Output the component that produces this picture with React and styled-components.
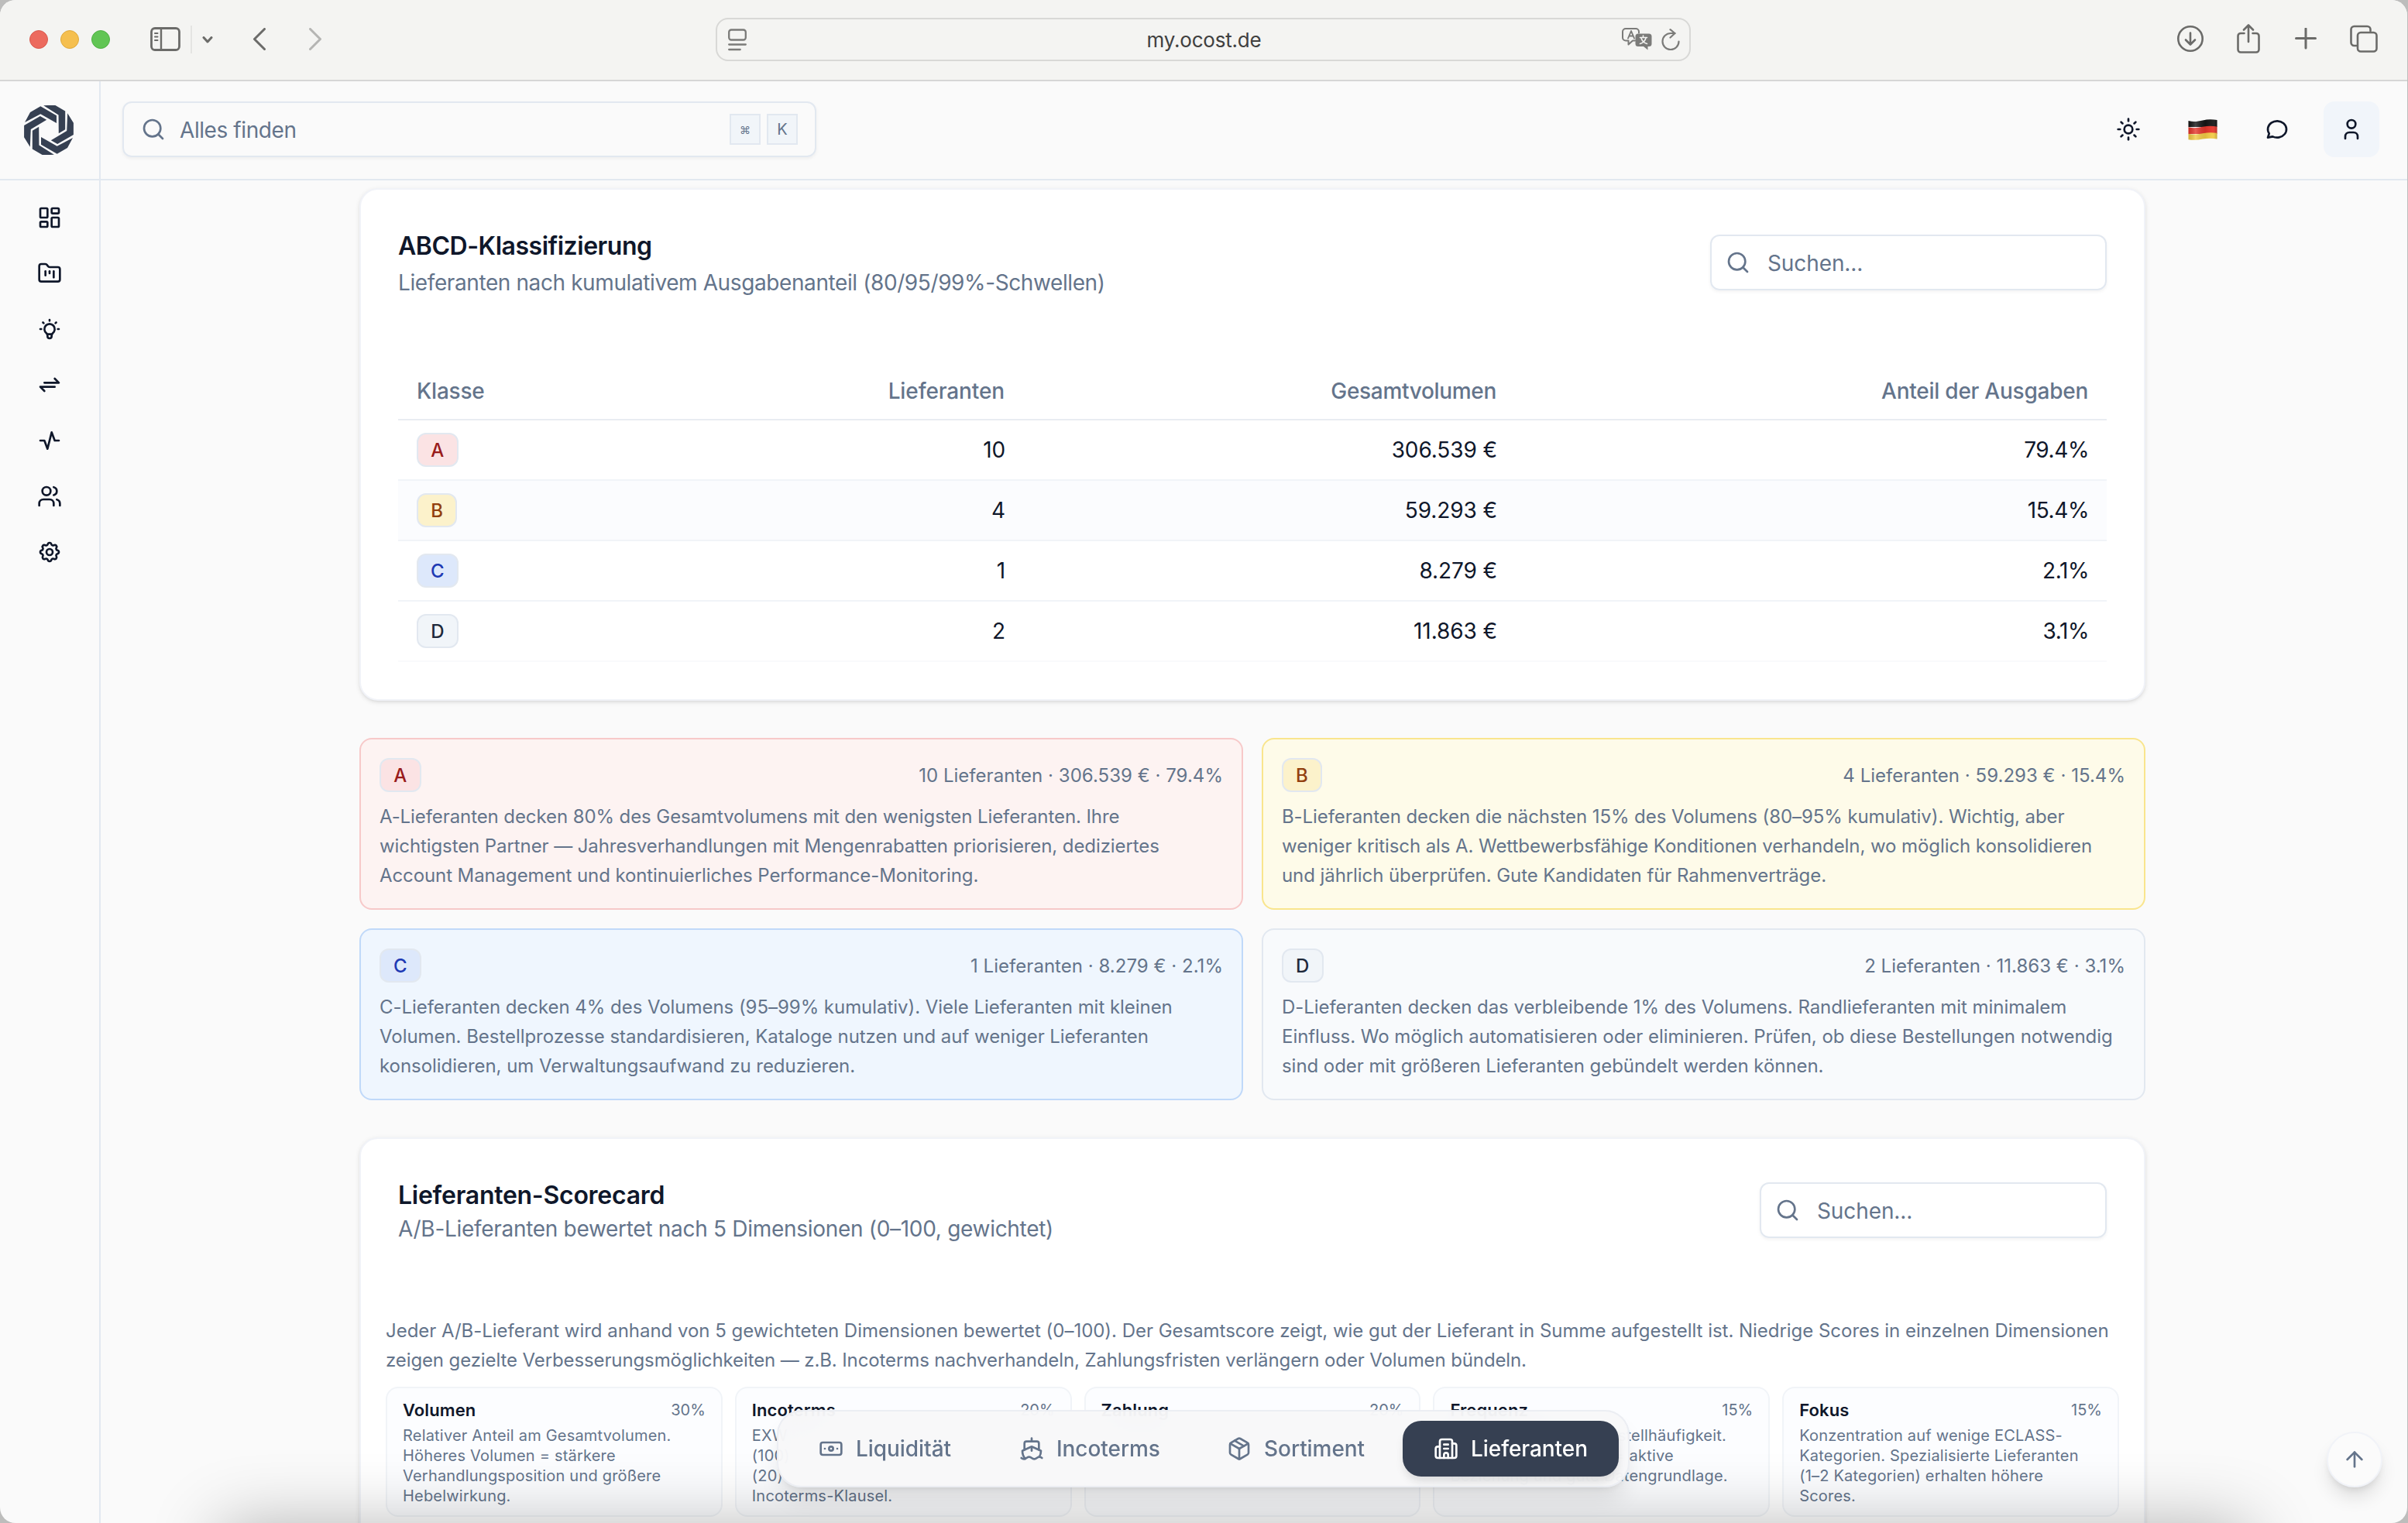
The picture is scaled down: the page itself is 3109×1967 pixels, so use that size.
import React from 'react';
import styled, { createGlobalStyle } from 'styled-components';
import {
  ArrowUp,
  Banknote,
  Building2,
  FolderKanban,
  LayoutDashboard,
  Package,
  Search,
  Ship,
  Sun,
  Users,
} from 'lucide-react';
import { TbActivity, TbArrowsExchange, TbBulb, TbMessageCircle, TbSettings, TbUser } from 'react-icons/tb';

const GlobalStyle = createGlobalStyle`
  * {
    box-sizing: border-box;
  }

  body {
    margin: 0;
    overflow: hidden;
    background: #bdbdbc;
    font-family: Inter, 'Liberation Sans', sans-serif;
    color: #0f172a;
  }
`;

/* ---------- browser window ---------- */

const Window = styled.div`
  position: relative;
  display: flex;
  flex-direction: column;
  width: 3108px;
  height: 1967px;
  overflow: hidden;
  border-radius: 20px;
  background: #fafafa;
`;

const Toolbar = styled.div`
  display: grid;
  grid-template-columns: 924px 1259px 1fr;
  align-items: center;
  flex: none;
  height: 105px;
  padding-bottom: 1px;
  border-bottom: 2px solid #d6d6d6;
  background: #f4f4f2;
  color: #6b6b69;
`;

const ToolbarLeft = styled.div`
  display: flex;
  align-items: center;
  padding-left: 38px;
`;

const Lights = styled.div`
  display: flex;
  gap: 16px;
  margin-right: 51px;
`;

const Light = styled.span`
  width: 24px;
  height: 24px;
  border: 1px solid ${(props) => props.$edge};
  border-radius: 50%;
  background: ${(props) => props.$color};
`;

const Divider = styled.span`
  width: 2px;
  height: 36px;
  margin: 0 13px 0 13px;
  background: #e4e4e2;
`;

const Glyph = styled.svg`
  display: block;
  flex: none;
  fill: none;
  stroke: currentColor;
  stroke-linecap: round;
  stroke-linejoin: round;
  margin-left: ${(props) => props.$ml || 0}px;
  opacity: ${(props) => (props.$dim ? 0.45 : 1)};
`;

const AddressBar = styled.div`
  display: grid;
  grid-template-columns: 1fr auto 1fr;
  align-items: center;
  height: 56px;
  padding: 0 12px 0 14px;
  border: 2px solid #d8d8d6;
  border-radius: 16px;
  color: #7b7b79;
`;

const Address = styled.span`
  color: #40403f;
  font-size: 26px;
  letter-spacing: -0.22px;
`;

const AddressActions = styled.div`
  display: flex;
  align-items: center;
  justify-content: flex-end;
  gap: 11px;
`;

const ToolbarRight = styled.div`
  display: flex;
  align-items: center;
  justify-content: flex-end;
  padding-right: 37px;
`;

/* ---------- app shell ---------- */

const Shell = styled.div`
  display: flex;
  flex: 1;
  min-height: 0;
`;

const Sidebar = styled.aside`
  display: flex;
  flex-direction: column;
  flex: none;
  width: 130px;
  border-right: 2px solid #e2e8f0;
`;

const LogoBox = styled.div`
  display: flex;
  align-items: center;
  justify-content: center;
  height: 128px;
  padding: 0 2px 1px 0;
  border-bottom: 2px solid #e2e8f0;
`;

const SideNav = styled.nav`
  display: flex;
  flex-direction: column;
  align-items: center;
  padding-top: 12px;
`;

const SideLink = styled.a`
  display: flex;
  align-items: center;
  justify-content: center;
  width: 72px;
  height: 72px;
  color: #0f172a;
`;

const Main = styled.div`
  flex: 1;
  min-width: 0;
`;

const Header = styled.header`
  display: flex;
  align-items: center;
  justify-content: space-between;
  height: 128px;
  padding: 0 36px 2px 28px;
  border-bottom: 2px solid #e2e8f0;
`;

const SearchField = styled.div`
  display: flex;
  align-items: center;
  width: ${(props) => props.$width}px;
  height: 72px;
  padding: 0 22px 0 ${(props) => props.$pad || 18}px;
  border: 2px solid #e2e8f0;
  border-radius: 12px;
  box-shadow: 0 2px 4px rgba(0, 0, 0, 0.05);
  color: #64748b;
  font-size: 28px;
  letter-spacing: ${(props) => props.$spacing || -0.1}px;
  white-space: nowrap;
`;

const SearchText = styled.span`
  flex: 1;
  padding-top: 2px;
  margin-left: ${(props) => props.$gap}px;
`;

const Key = styled.kbd`
  display: flex;
  align-items: center;
  justify-content: center;
  width: 40px;
  height: 40px;
  margin-left: 8px;
  border: 2px solid #e2e8f0;
  background: #f1f5f9;
  font-family: inherit;
  font-size: ${(props) => props.$size}px;
  letter-spacing: 0;
`;

const HeaderActions = styled.div`
  display: flex;
  gap: 24px;
`;

const IconButton = styled.button`
  display: flex;
  align-items: center;
  justify-content: center;
  width: 72px;
  height: 72px;
  padding: 0;
  border: none;
  border-radius: 14px;
  background: ${(props) => (props.$active ? '#f1f5fa' : 'transparent')};
  color: #0f172a;
`;

const Content = styled.main`
  display: flex;
  flex-direction: column;
  width: 2306px;
  margin: 10px 0 0 334px;
`;

/* ---------- cards ---------- */

const Card = styled.section`
  height: ${(props) => props.$height}px;
  margin-bottom: 48px;
  padding: 48px ${(props) => props.$side}px;
  border: 2px solid #f1f3f8;
  border-radius: 24px;
  background: #fff;
  box-shadow: 0 2px 6px rgba(0, 0, 0, 0.1), 0 2px 4px -2px rgba(0, 0, 0, 0.1);
`;

const CardHeader = styled.div`
  display: flex;
  align-items: center;
  justify-content: space-between;
  padding: 0 ${(props) => props.$inset || 0}px;
  margin-bottom: ${(props) => props.$mb}px;
`;

const Title = styled.h2`
  margin: 0 0 ${(props) => props.$gap || 0}px;
  padding-top: 2px;
  font-size: 32px;
  font-weight: 600;
  line-height: 46px;
  letter-spacing: ${(props) => props.$spacing}px;
`;

const Subtitle = styled.p`
  margin: 0;
  color: #64748b;
  font-size: 28px;
  line-height: 40px;
  letter-spacing: ${(props) => props.$spacing}px;
`;

const Table = styled.table`
  width: 2206px;
  table-layout: fixed;
  border-collapse: separate;
  border-spacing: 0;
`;

const Th = styled.th`
  width: ${(props) => props.$width}px;
  height: 76px;
  padding: 2px 24px 0;
  border-bottom: 2px solid #e9ecf2;
  color: #64748b;
  font-size: 28px;
  font-weight: 500;
  letter-spacing: ${(props) => props.$spacing || 0}px;
  text-align: ${(props) => (props.$left ? 'left' : 'right')};
`;

const Td = styled.td`
  height: 78px;
  padding: 0 23px 0 24px;
  border-bottom: 2px solid ${(props) => (props.$last ? '#f9fafc' : '#f1f4f8')};
  background: ${(props) => (props.$tinted ? '#fbfcfe' : 'transparent')};
  font-size: 28px;
  letter-spacing: ${(props) => props.$spacing || -0.1}px;
  text-align: ${(props) => (props.$left ? 'left' : 'right')};
`;

const badgeTones = {
  A: { bg: '#fbe3e4', text: '#991b1b' },
  B: { bg: '#fcf2cb', text: '#92400e' },
  C: { bg: '#dde8fb', text: '#1e3ab4' },
  D: { bg: '#f1f5f9', text: '#1e293b' },
};

const Badge = styled.span`
  display: inline-flex;
  align-items: center;
  justify-content: center;
  width: ${(props) => (props.$tone === 'B' ? 52 : 53.5)}px;
  height: 44px;
  border: 2px solid #e2e8f0;
  border-radius: 12px;
  background: ${(props) => badgeTones[props.$tone].bg};
  color: ${(props) => badgeTones[props.$tone].text};
  font-size: 24px;
  font-weight: 500;
  vertical-align: middle;
`;

const ClassGrid = styled.div`
  display: grid;
  grid-template-columns: 1fr 1fr;
  gap: 24px;
  margin-bottom: 48px;
`;

const classTones = {
  A: { bg: '#fdf3f2', border: '#f7c9c9' },
  B: { bg: '#fefbe9', border: '#f9e58d' },
  C: { bg: '#eff6fe', border: '#c0d9f9' },
  D: { bg: '#f8fafc', border: '#e2e8f0' },
};

const ClassCard = styled.article`
  height: 222px;
  padding: 24px;
  border: 2px solid ${(props) => classTones[props.$tone].border};
  border-radius: 16px;
  background: ${(props) => classTones[props.$tone].bg};
`;

const ClassHead = styled.div`
  display: flex;
  align-items: center;
  justify-content: space-between;
  margin-bottom: 13px;
`;

const ClassStat = styled.span`
  color: #64748b;
  font-size: 24px;
  letter-spacing: 0.03px;
`;

const Note = styled.p`
  margin: 0;
  color: #64748b;
  font-size: 24px;
  line-height: 38px;
  letter-spacing: ${(props) => props.$spacing}px;
  white-space: pre-line;
`;

const Dimensions = styled.div`
  display: grid;
  grid-template-columns: repeat(5, 1fr);
  gap: 16px;
  margin-top: 15px;
`;

const Dimension = styled.div`
  height: 168px;
  padding: 12px 20px;
  border: 2px solid #f1f4f8;
  border-radius: 16px;
  background: #fcfdff;
`;

const DimensionHead = styled.div`
  display: flex;
  align-items: center;
  justify-content: space-between;
  height: 32px;
  margin-bottom: 4px;
`;

const DimensionName = styled.strong`
  font-size: 22px;
  font-weight: 600;
  letter-spacing: 0.1px;
`;

const DimensionWeight = styled.span`
  color: #64748b;
  font-size: 20px;
`;

const DimensionText = styled.p`
  margin: 0;
  color: #64748b;
  font-size: 20px;
  line-height: 26px;
  letter-spacing: 0.2px;
  white-space: pre;
`;

/* ---------- floating parts ---------- */

const DockShade = styled.div`
  position: absolute;
  top: 1972px;
  left: 285px;
  right: 205px;
  height: 200px;
  box-shadow: 0 0 90px rgba(0, 0, 0, 0.3);
`;

const TabBar = styled.nav`
  position: absolute;
  left: 1003px;
  top: 1821px;
  display: flex;
  gap: 8px;
  height: 100px;
  padding: 12px;
  border: 2px solid #eceef3;
  border-radius: 32px;
  background: rgba(248, 248, 249, 0.93);
  backdrop-filter: blur(24px);
  box-shadow: 0 20px 30px -6px rgba(0, 0, 0, 0.1), 0 8px 12px -8px rgba(0, 0, 0, 0.12);
`;

const Tab = styled.a`
  display: flex;
  align-items: center;
  gap: 16px;
  width: ${(props) => props.$width}px;
  height: 72px;
  padding-left: 40px;
  border-radius: 24px;
  background: ${(props) => (props.$active ? '#364052' : 'transparent')};
  box-shadow: ${(props) => (props.$active ? '0 8px 12px -2px rgba(0, 0, 0, 0.12)' : 'none')};
  color: ${(props) => (props.$active ? '#fff' : '#64748b')};
  font-size: 28px;
  font-weight: 500;
  letter-spacing: -0.06px;
`;

const ToTop = styled.button`
  position: absolute;
  left: 3004px;
  top: 1849px;
  display: flex;
  align-items: center;
  justify-content: center;
  width: 72px;
  height: 72px;
  padding: 0;
  border: 2px solid #f1f3f8;
  border-radius: 50%;
  background: #fbfbfb;
  box-shadow: 0 16px 24px -4px rgba(0, 0, 0, 0.12), 0 6px 10px -4px rgba(0, 0, 0, 0.1);
  color: #64748b;
`;

/* ---------- data ---------- */

const classes = [
  {
    id: 'A',
    count: '10',
    volume: '306.539 €',
    share: '79.4%',
    spacing: -0.09,
    text: 'A-Lieferanten decken 80% des Gesamtvolumens mit den wenigsten Lieferanten. Ihre\nwichtigsten Partner — Jahresverhandlungen mit Mengenrabatten priorisieren, dediziertes\nAccount Management und kontinuierliches Performance-Monitoring.',
  },
  {
    id: 'B',
    count: '4',
    volume: '59.293 €',
    share: '15.4%',
    spacing: -0.08,
    text: 'B-Lieferanten decken die nächsten 15% des Volumens (80–95% kumulativ). Wichtig, aber\nweniger kritisch als A. Wettbewerbsfähige Konditionen verhandeln, wo möglich konsolidieren\nund jährlich überprüfen. Gute Kandidaten für Rahmenverträge.',
  },
  {
    id: 'C',
    count: '1',
    volume: '8.279 €',
    share: '2.1%',
    spacing: -0.045,
    text: 'C-Lieferanten decken 4% des Volumens (95–99% kumulativ). Viele Lieferanten mit kleinen\nVolumen. Bestellprozesse standardisieren, Kataloge nutzen und auf weniger Lieferanten\nkonsolidieren, um Verwaltungsaufwand zu reduzieren.',
  },
  {
    id: 'D',
    count: '2',
    volume: '11.863 €',
    share: '3.1%',
    spacing: -0.05,
    text: 'D-Lieferanten decken das verbleibende 1% des Volumens. Randlieferanten mit minimalem\nEinfluss. Wo möglich automatisieren oder eliminieren. Prüfen, ob diese Bestellungen notwendig\nsind oder mit größeren Lieferanten gebündelt werden können.',
  },
];

const dimensions = [
  {
    name: 'Volumen',
    weight: '30%',
    text: 'Relativer Anteil am Gesamtvolumen.\nHöheres Volumen = stärkere\nVerhandlungsposition und größere\nHebelwirkung.',
  },
  { name: 'Incoterms', weight: '20%', text: 'EXW\n(100)\n(20)\nIncoterms-Klausel.' },
  { name: 'Zahlung', weight: '20%', text: '' },
  {
    name: 'Frequenz',
    weight: '15%',
    text: 'Regelmäßigkeit der Bestellhäufigkeit.\nHäufige Bestellungen = aktive\nBeziehung und gute Datengrundlage.',
  },
  {
    name: 'Fokus',
    weight: '15%',
    text: 'Konzentration auf wenige ECLASS-\nKategorien. Spezialisierte Lieferanten\n(1–2 Kategorien) erhalten höhere\nScores.',
  },
];

const sideIcons = [LayoutDashboard, FolderKanban, TbBulb, TbArrowsExchange, TbActivity, Users, TbSettings];

const tabs = [
  { label: 'Liquidität', icon: Banknote, width: 251 },
  { label: 'Incoterms', icon: Ship, width: 260 },
  { label: 'Sortiment', icon: Package, width: 259 },
  { label: 'Lieferanten', icon: Building2, width: 279, active: true },
];

/* ---------- drawings ---------- */

const Logo = () => (
  <svg width="64" height="64" viewBox="-96 -96 192 192" fill="#364052">
    {[0, 60, 120, 180, 240, 300].map((angle) => (
      <path key={angle} d="M-93-30-72-69-32-92 30-56V-27L-32-62Z" transform={`rotate(${angle})`} />
    ))}
  </svg>
);

const GermanFlag = () => (
  <svg width="38" height="27" viewBox="0 0 38 27">
    <defs>
      <linearGradient id="wave" x1="0" x2="1" y1="0" y2="0">
        <stop offset="0" stopColor="#000" stopOpacity="0.12" />
        <stop offset="0.25" stopColor="#fff" stopOpacity="0.2" />
        <stop offset="0.6" stopColor="#000" stopOpacity="0.08" />
        <stop offset="0.85" stopColor="#fff" stopOpacity="0.06" />
        <stop offset="1" stopColor="#000" stopOpacity="0.2" />
      </linearGradient>
    </defs>
    <path d="M0.5 2C7 3.8 13 2.8 19 1.4C25 0 31 0 37.5 1V10H0.5Z" fill="#151515" />
    <path d="M0.5 10.3C7 12 13 11 19 9.8C25 8.5 31 8.3 37.5 9.5V19H0.5Z" fill="#e6352b" />
    <path
      d="M0.5 18.7C7 20.2 13 19.4 19 18.2C25 17 31 16.8 37.5 17.8V25.5C31 24.3 25 24.6 19 25.6C13 26.8 7 27.4 0.5 26.2Z"
      fill="#f3cb45"
    />
    <path
      d="M0.5 2C7 3.8 13 2.8 19 1.4C25 0 31 0 37.5 1V25.5C31 24.3 25 24.6 19 25.6C13 26.8 7 27.4 0.5 26.2Z"
      fill="url(#wave)"
    />
  </svg>
);

const BrowserBar = () => (
  <Toolbar>
    <ToolbarLeft>
      <Lights>
        <Light $color="#ec6a5e" $edge="#d9594e" />
        <Light $color="#f5bf4f" $edge="#dfa93c" />
        <Light $color="#61c554" $edge="#4fb043" />
      </Lights>
      <Glyph width="40" height="32" viewBox="0 0 40 32" strokeWidth="2.8">
        <rect x="2.5" y="1.5" width="36" height="28" rx="4.5" />
        <path d="M15 1.5V29.5" strokeWidth="2.4" />
        <path d="M7 8h3.5M7 12.500h3.500M7 17h3.500" strokeWidth="2" />
      </Glyph>
      <Divider />
      <Glyph width="14" height="9" viewBox="0 0 14 9" strokeWidth="3">
        <path d="M2 1.5l5 5.5 5-5.5" />
      </Glyph>
      <Glyph $ml={51} width="18" height="30" viewBox="0 0 18 30" strokeWidth="3">
        <path d="M15.5 1.500L2.500 14.500l13 13" />
      </Glyph>
      <Glyph $ml={54} $dim width="18" height="30" viewBox="0 0 18 30" strokeWidth="3">
        <path d="M2.5 1.500l13 13-13 13" />
      </Glyph>
    </ToolbarLeft>
    <AddressBar>
      <Glyph width="24" height="29" viewBox="0 0 24 29" strokeWidth="2.3">
        <rect x="1.2" y="1.5" width="21.6" height="13" rx="3" />
        <path d="M1.2 20.500h21.600M1.200 27h14.500" />
      </Glyph>
      <Address>my.ocost.de</Address>
      <AddressActions>
        <Glyph width="40" height="30" viewBox="0 0 40 30" strokeWidth="2">
          <path d="M17 16.500H14l-5.500 5v-5H5a4 4 0 0 1-4-4V5a4 4 0 0 1 4-4h13a4 4 0 0 1 4 4v1.500" />
          <path d="M8 13.500l4-9.500 4 9.500M9.500 10.500h5" strokeWidth="1.9" />
          <path
            d="M21 7.500h14a3.500 3.500 0 0 1 3.500 3.500v9.500a3.500 3.500 0 0 1-3.500 3.500h-1.500v4.500l-5.500-4.500H21a3.500 3.500 0 0 1-3.500-3.500V11A3.500 3.500 0 0 1 21 7.500Z"
            fill="currentColor"
            stroke="none"
          />
          <path
            d="M27.500 10v2.500M23.500 12.500h9M31 13c-1 4-4 6.500-7.500 7.500M25 13c1 4 4 6.500 7.500 7.500"
            stroke="#f4f4f2"
            strokeWidth="1.6"
          />
        </Glyph>
        <Glyph width="24" height="29" viewBox="0 0 24 29" strokeWidth="2.2">
          <path d="M22.500 16.500A10.500 10.500 0 1 1 12 6h5.500" />
          <path d="M11.500 1.200l6 4.800-6 5.500" />
        </Glyph>
      </AddressActions>
    </AddressBar>
    <ToolbarRight>
      <Glyph width="36" height="36" viewBox="0 0 36 36" strokeWidth="2.6">
        <circle cx="18" cy="17" r="15.7" />
        <path d="M18 9.500V24M12 18.500l6 6 6-6" />
      </Glyph>
      <Glyph $ml={41} width="32" height="40" viewBox="0 0 32 40" strokeWidth="2.6">
        <path d="M10.500 12H6a3.500 3.500 0 0 0-3.500 3.500V33A3.500 3.500 0 0 0 6 36.500h20a3.500 3.500 0 0 0 3.500-3.500V15.500A3.500 3.500 0 0 0 26 12h-4.500" />
        <path d="M16 23V2M10 7.500l6-6 6 6" />
      </Glyph>
      <Glyph $ml={43} width="30" height="30" viewBox="0 0 30 30" strokeWidth="3">
        <path d="M15 1v25M2.500 13.500h25" />
      </Glyph>
      <Glyph $ml={41} width="38" height="38" viewBox="0 0 38 38" strokeWidth="2.6">
        <rect x="11" y="10" width="24.500" height="24.500" rx="4" />
        <path d="M9.500 27H6.500A4 4 0 0 1 2.500 23V6A4 4 0 0 1 6.500 2H23.500A4 4 0 0 1 27.500 6V8" />
      </Glyph>
    </ToolbarRight>
  </Toolbar>
);

const App = () => {
  return (
    <>
      <GlobalStyle />
      <Window>
        <BrowserBar />
        <Shell>
          <Sidebar>
            <LogoBox>
              <Logo />
            </LogoBox>
            <SideNav>
              {sideIcons.map((Icon, i) => (
                <SideLink key={i}>
                  <Icon size={32} />
                </SideLink>
              ))}
            </SideNav>
          </Sidebar>
          <Main>
            <Header>
              <SearchField $width={896} $pad={22} $spacing={-0.42}>
                <Search size={32} />
                <SearchText $gap={18}>Alles finden</SearchText>
                <Key $size={14}>⌘</Key>
                <Key $size={20}>K</Key>
              </SearchField>
              <HeaderActions>
                <IconButton>
                  <Sun size={32} />
                </IconButton>
                <IconButton>
                  <GermanFlag />
                </IconButton>
                <IconButton>
                  <TbMessageCircle size={32} />
                </IconButton>
                <IconButton $active>
                  <TbUser size={32} />
                </IconButton>
              </HeaderActions>
            </Header>
            <Content>
              <Card $height={662} $side={48}>
                <CardHeader $mb={82}>
                  <div>
                    <Title $gap={4} $spacing={-0.47}>ABCD-Klassifizierung</Title>
                    <Subtitle $spacing={-0.4}>
                      Lieferanten nach kumulativem Ausgabenanteil (80/95/99%-Schwellen)
                    </Subtitle>
                  </div>
                  <SearchField $width={512}>
                    <Search size={32} />
                    <SearchText $gap={22}>Suchen...</SearchText>
                  </SearchField>
                </CardHeader>
                <Table>
                  <thead>
                    <tr>
                      <Th $left $width={400} $spacing={-0.2}>Klasse</Th>
                      <Th $width={407} $spacing={-0.12}>Lieferanten</Th>
                      <Th $width={635} $spacing={-0.32}>Gesamtvolumen</Th>
                      <Th $width={764} $spacing={-0.25}>Anteil der Ausgaben</Th>
                    </tr>
                  </thead>
                  <tbody>
                    {classes.map((row, i) => {
                      const cell = { $tinted: row.id === 'B', $last: i === classes.length - 1 };
                      return (
                        <tr key={row.id}>
                          <Td $left {...cell}>
                            <Badge $tone={row.id}>{row.id}</Badge>
                          </Td>
                          <Td {...cell}>{row.count}</Td>
                          <Td {...cell}>{row.volume}</Td>
                          <Td {...cell} $spacing={-0.4}>{row.share}</Td>
                        </tr>
                      );
                    })}
                  </tbody>
                </Table>
              </Card>

              <ClassGrid>
                {classes.map((item) => (
                  <ClassCard key={item.id} $tone={item.id}>
                    <ClassHead>
                      <Badge $tone={item.id}>{item.id}</Badge>
                      <ClassStat>
                        {item.count} Lieferanten · {item.volume} · {item.share}
                      </ClassStat>
                    </ClassHead>
                    <Note $spacing={item.spacing}>{item.text}</Note>
                  </ClassCard>
                ))}
              </ClassGrid>

              <Card $height={700} $side={32}>
                <CardHeader $inset={16} $mb={93}>
                  <div>
                    <Title $spacing={-0.27}>Lieferanten-Scorecard</Title>
                    <Subtitle $spacing={-0.3}>A/B-Lieferanten bewertet nach 5 Dimensionen (0–100, gewichtet)</Subtitle>
                  </div>
                  <SearchField $width={448}>
                    <Search size={32} />
                    <SearchText $gap={22}>Suchen...</SearchText>
                  </SearchField>
                </CardHeader>
                <Note $spacing={-0.03}>
                  Jeder A/B-Lieferant wird anhand von 5 gewichteten Dimensionen bewertet (0–100). Der Gesamtscore zeigt, wie
                  gut der Lieferant in Summe aufgestellt ist. Niedrige Scores in einzelnen Dimensionen
                </Note>
                <Note $spacing={-0.11}>
                  zeigen gezielte Verbesserungsmöglichkeiten — z.B. Incoterms nachverhandeln, Zahlungsfristen verlängern
                  oder Volumen bündeln.
                </Note>
                <Dimensions>
                  {dimensions.map((dim) => (
                    <Dimension key={dim.name}>
                      <DimensionHead>
                        <DimensionName>{dim.name}</DimensionName>
                        <DimensionWeight>{dim.weight}</DimensionWeight>
                      </DimensionHead>
                      <DimensionText>{dim.text}</DimensionText>
                    </Dimension>
                  ))}
                </Dimensions>
              </Card>
            </Content>
          </Main>
        </Shell>

        <DockShade />
        <TabBar>
          {tabs.map(({ label, icon: Icon, width, active }) => (
            <Tab key={label} $width={width} $active={active}>
              <Icon size={32} />
              {label}
            </Tab>
          ))}
        </TabBar>
        <ToTop>
          <ArrowUp size={32} />
        </ToTop>
      </Window>
    </>
  );
};

export default App;
